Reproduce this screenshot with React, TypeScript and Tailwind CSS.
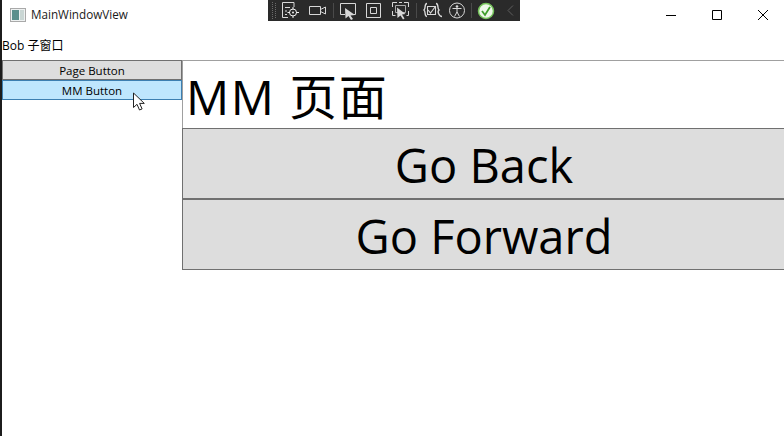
import { Fragment } from "react"

const uiFont = "font-['Open_Sans','Noto_Sans_CJK_SC',sans-serif]"

function ToolbarIcons() {
  return (
    <svg width="252" height="21" viewBox="0 0 252 21" fill="none" stroke="#d8d8d8" strokeWidth="1" className="block">
      {/* grip */}
      <path d="M4.500 2v17M7.500 3v16" stroke="#6a6a6a" strokeDasharray="1 1" />
      {/* live tree */}
      <path d="M20 17.500H14.500V2.500H26V7M17 7.500h5M17 11h2M17 14.500h2" />
      <circle cx="25" cy="12.500" r="3.500" stroke="#f0f0f0" />
      <circle cx="25" cy="12.500" r="1" fill="#f0f0f0" stroke="none" />
      <path d="M25 7v2.500M25 15.500V18M19.500 12.500H22M28 12.500h3" stroke="#f0f0f0" />
      {/* camera */}
      <path d="M41.500 6.500h11v8h-11zM52.500 9.500l5-2.500v7l-5-2.500" />
      <path d="M65.500 3v15" stroke="#4a4a4a" />
      {/* select element */}
      <path d="M77 14.500h-4.500V3.500h15v11H85" />
      <path d="M77 8l10 7-4.500.5 2.500 3.500-2 1-2.500-4-3 2.500z" fill="#d8d8d8" stroke="none" />
      {/* layout box */}
      <path d="M98.500 3.500h14v14h-14zM102.500 7.500h6v6h-6z" />
      {/* track focused */}
      <path d="M124.500 7V2.500h4.500M136 2.500h4.500V7M124.500 11v4.500h3M140.500 11v4.500h-2M131 2.500h3" />
      <path d="M127.500 5.500h10v7h-10z" stroke="#a8a8a8" />
      <path d="M129 7.500l8.500 6.500-3.500.5 2.500 4-1.500 1-2.500-4-3 2.500z" fill="#d8d8d8" stroke="none" />
      <path d="M148.500 3v15" stroke="#4a4a4a" />
      {/* binding failures */}
      <path d="M159 4c-3 0-1 5-3 6.500 2 1.500 0 6.500 3 6.500M168 4c3 0 1 5 3 6.500-2 1.500 0 6.500 3 6.500" strokeWidth="1.400" transform="translate(0 -.5)" />
      <path d="M160 10l2.500 3 4.500-6M159.500 6.500h8v8h-8z" strokeWidth="1.100" />
      {/* accessibility */}
      <circle cx="189" cy="10.500" r="7.500" />
      <circle cx="189" cy="6.500" r="1.300" fill="#d8d8d8" stroke="none" />
      <path d="M184.500 8.500h9M189 8.500v4M189 12l-2.500 4.500M189 12l2.500 4.500" />
      <path d="M203.500 3v15" stroke="#4a4a4a" />
      {/* status check */}
      <circle cx="218" cy="11" r="7.500" fill="#eef8ea" stroke="#74c25a" strokeWidth="1.500" />
      <path d="M214 11l3 4 5-8" stroke="#3f9e2c" strokeWidth="1.800" />
      {/* collapse */}
      <path d="M245 5.500l-5 5 5 5" stroke="#5e5e5e" />
    </svg>
  )
}

function Cursor() {
  return (
    <svg width="15" height="20" viewBox="0 0 15 20" className="block">
      <path d="M1.500 1v14.500l3.500-3.200 2.500 5.700 2.600-1.100-2.500-5.500h4.700z" fill="#fff" stroke="#222" strokeWidth="1" />
    </svg>
  )
}

const windowButtons = [
  "M0 5.500h10",
  "M.5.500h9v9h-9z",
  "M0 0l10 10M10 0L0 10",
]

export default function App() {
  return (
    <div className={`relative flex h-[436px] w-[784px] overflow-hidden bg-white text-black ${uiFont}`}>
      <div className="w-[2px] shrink-0 bg-[#1c1c1c]" />

      <div className="flex min-w-0 flex-1 flex-col">
        {/* Title bar */}
        <header className="flex h-[30px] items-center">
          <div className="ml-[8px] flex h-[14px] w-[16px] items-center gap-[1px] border border-[#a9a9a9] bg-[#eef1f1] p-[1px]">
            <div className="h-full w-[7px] bg-[#5c8f8c]" />
            <div className="h-full flex-1 bg-[#c9d6d4]" />
          </div>
          <span className="ml-[5px] text-[11.7px] leading-none text-[#1a1a1a]">MainWindowView</span>
          <div className="ml-auto -mr-[2px] flex h-full">
            {windowButtons.map((d, i) => (
              <Fragment key={i}>
                <div className="flex w-[46px] items-center justify-center">
                  <svg width="10" height="10" viewBox="0 0 10 10" fill="none" stroke="#000" strokeWidth="1" className="block">
                    <path d={d} />
                  </svg>
                </div>
              </Fragment>
            ))}
          </div>
        </header>

        {/* Window label */}
        <div className="flex h-[30px] items-center pt-[2px] text-[12px] leading-none">Bob 子窗口</div>

        <main className="flex flex-1">
          {/* Sidebar */}
          <nav className="flex w-[180px] shrink-0 flex-col">
            <button className="h-[20px] border border-[#707070] bg-[#dddddd] pt-[2px] text-[11.5px] leading-none">Page Button</button>
            <button className="h-[20px] border border-[#3c7fb1] bg-[#bee6fd] pt-[2px] text-[11.5px] leading-none">MM Button</button>
          </nav>

          {/* Content */}
          <section className="flex h-[210px] w-[604px] shrink-0 flex-col border-t border-[#a0a0a0]">
            <div className="flex h-[67px] items-center border-l border-[#a0a0a0] pl-[3px] pt-[4px] text-[48px] leading-none tracking-[1.5px]">MM 页面</div>
            <button className="h-[71px] border border-[#707070] bg-[#dddddd] pt-[3px] text-[47px] leading-none">Go Back</button>
            <button className="h-[71px] border border-[#707070] bg-[#dddddd] pt-[3px] text-[47px] leading-none">Go Forward</button>
          </section>
        </main>
      </div>

      {/* WPF debug toolbar */}
      <div className="absolute left-[268px] top-0 h-[21px] w-[252px] bg-[#2a2a2a]">
        <ToolbarIcons />
      </div>

      <div className="absolute left-[132px] top-[92px]">
        <Cursor />
      </div>
    </div>
  )
}
